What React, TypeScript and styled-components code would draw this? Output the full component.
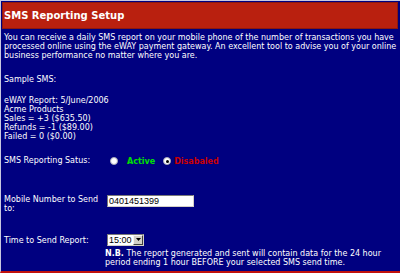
import styled, { createGlobalStyle } from "styled-components";

const Global = createGlobalStyle`
  html, body { margin: 0; padding: 0; background: #000080; }
`;

const Page = styled.div`
  width: 400px;
  height: 273px;
  box-sizing: border-box;
  background: #000080;
  border-top: 1px solid #c8c8e0;
  border-left: 1px solid #c8c8e0;
  border-bottom: 2px solid #c0100c;
  padding: 1px 0 0 1px;
  font-family: "DejaVu Sans", Verdana, sans-serif;
  font-size: 8px;
  line-height: 9px;
  color: #ffffff;
  overflow: hidden;
`;

const Header = styled.div`
  height: 27px;
  box-sizing: border-box;
  margin-right: 2px;
  background: #b9200f;
  border: 1px solid #8b1a10;
  display: flex;
  align-items: center;
  padding-left: 1px;
  font-size: 10px;
  font-weight: bold;
`;

const Body = styled.div`
  padding: 3.5px 0 0 2px;
`;

const Para = styled.p<{ $gap: number }>`
  margin: 0 0 ${({ $gap }) => $gap}px;
`;

const Row = styled.div<{ $gap?: number }>`
  display: grid;
  grid-template-columns: 103px 1fr;
  align-items: start;
  margin-bottom: ${({ $gap }) => $gap ?? 0}px;
`;

const Label = styled.div`
  padding-right: 4px;
`;

const Radios = styled.div`
  display: flex;
  align-items: center;
  padding-top: 1px;
`;

const Radio = styled.span<{ $on?: boolean; $left: number; $right: number }>`
  width: 8px;
  height: 8px;
  border-radius: 50%;
  background: #ffffff;
  border: 1px solid #a8a8b8;
  box-sizing: border-box;
  display: inline-flex;
  align-items: center;
  justify-content: center;
  margin: 0 ${({ $right }) => $right}px 0 ${({ $left }) => $left}px;
  &::after {
    content: "";
    width: 3px;
    height: 3px;
    border-radius: 50%;
    background: ${({ $on }) => ($on ? "#000" : "transparent")};
  }
`;

const Choice = styled.span<{ $color: string }>`
  color: ${({ $color }) => $color};
  font-weight: bold;
`;

const Field = styled.div<{ $width: number; $shift?: number }>`
  width: ${({ $width }) => $width}px;
  height: 12px;
  box-sizing: border-box;
  margin-top: ${({ $shift }) => $shift ?? 0}px;
  background: #fff;
  border: 1px solid;
  border-color: #7a7a7a #d4d0c8 #d4d0c8 #7a7a7a;
  color: #000;
  font-family: "Liberation Sans", Arial, sans-serif;
  font-size: 9px;
  line-height: 10px;
  display: flex;
  justify-content: space-between;
  padding-left: 1px;
`;

const Arrow = styled.span`
  width: 10px;
  height: 10px;
  background: #d4d0c8;
  border: 1px solid;
  border-color: #f4f4f4 #404040 #404040 #f4f4f4;
  box-sizing: border-box;
  display: flex;
  align-items: center;
  justify-content: center;
`;

const Note = styled.div`
  margin-top: 3px;
  margin-left: -2px;
`;

export default function App() {
  return (
    <Page>
      <Global />
      <Header>SMS Reporting Setup</Header>
      <Body>
        <Para $gap={15}>
          You can receive a daily SMS report on your mobile phone of the number of transactions you have
          processed online using the eWAY payment gateway. An excellent tool to advise you of your online
          business performance no matter where you are.
        </Para>
        <Para $gap={12}>Sample SMS:</Para>
        <Para $gap={15}>
          eWAY Report: 5/June/2006<br />
          Acme Products<br />
          Sales = +3 ($635.50)<br />
          Refunds = -1 ($89.00)<br />
          Failed = 0 ($0.00)
        </Para>
        <Row $gap={29}>
          <Label>SMS Reporting Satus:</Label>
          <Radios>
            <Radio $left={3} $right={9} />
            <Choice $color="#00e000">Active</Choice>
            <Radio $on $left={8} $right={3} />
            <Choice $color="#cc0000">Disabaled</Choice>
          </Radios>
        </Row>
        <Row $gap={23}>
          <Label>Mobile Number to Send to:</Label>
          <Field $width={87}>0401451399</Field>
        </Row>
        <Row>
          <Label>Time to Send Report:</Label>
          <div>
            <Field $width={37} $shift={-2}>
              15:00
              <Arrow>
                <svg width="5" height="3" viewBox="0 0 5 3">
                  <path d="M0 0h5L2.5 3z" fill="#000" />
                </svg>
              </Arrow>
            </Field>
            <Note>
              <b>N.B.</b> The report generated and sent will contain data for the 24 hour period ending 1
              hour BEFORE your selected SMS send time.
            </Note>
          </div>
        </Row>
      </Body>
    </Page>
  );
}
